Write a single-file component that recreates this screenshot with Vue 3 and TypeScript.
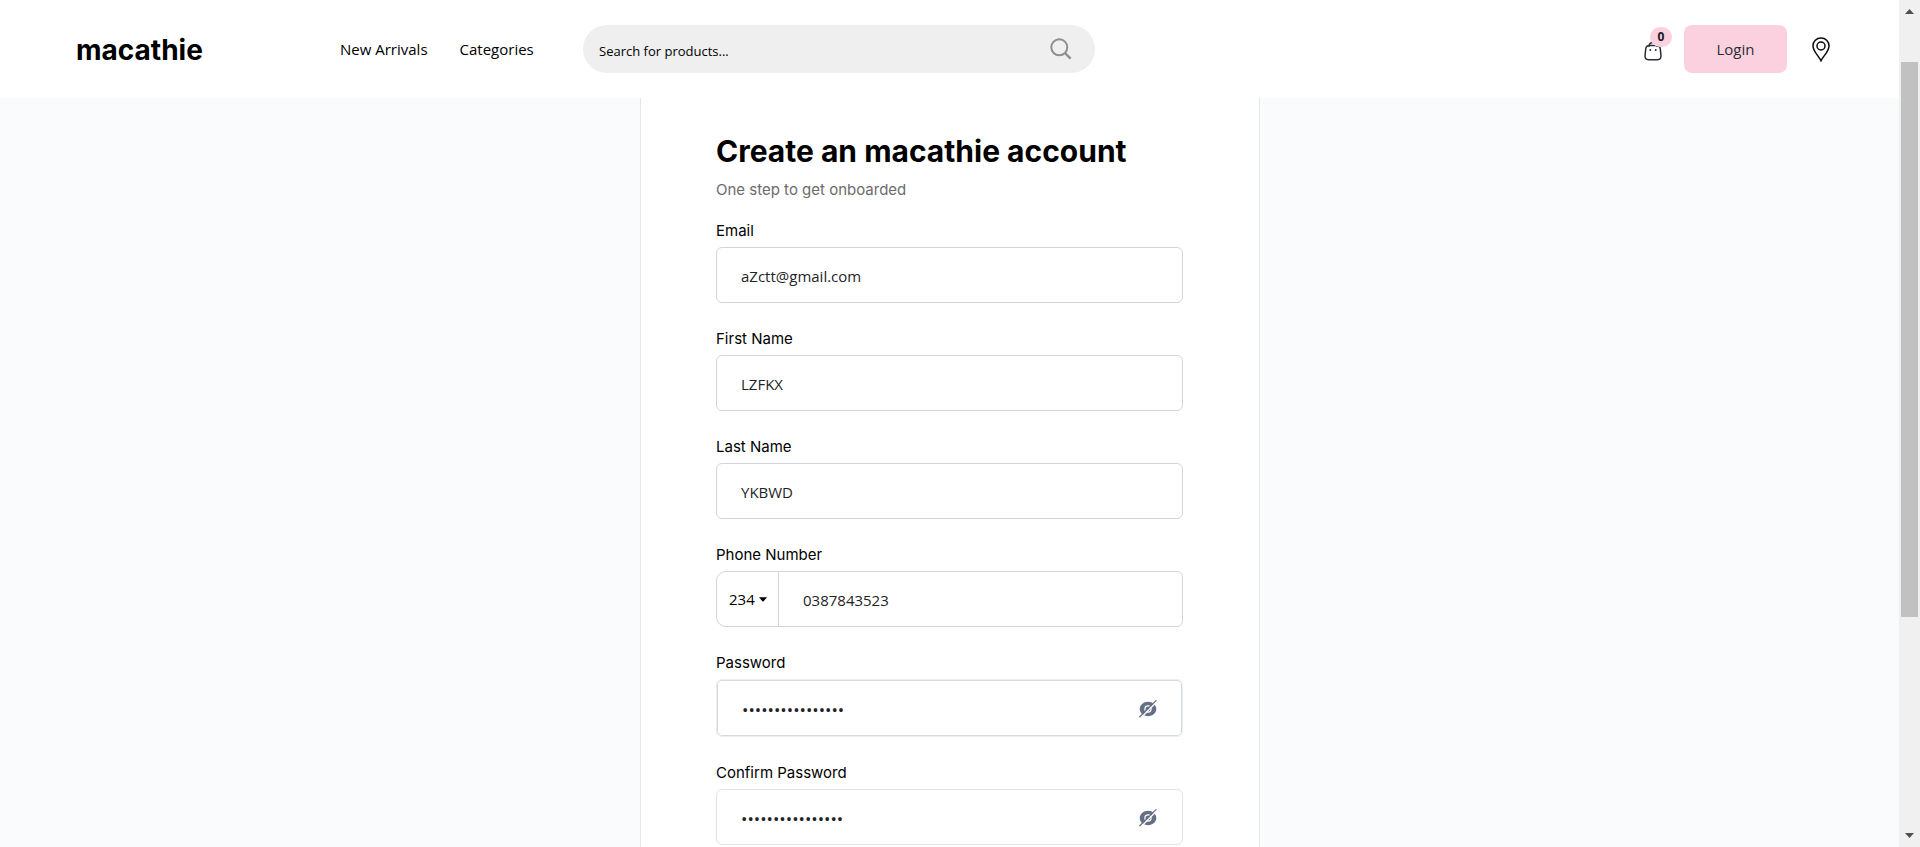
<script setup lang="ts">
import { ref } from 'vue'

interface Field {
  id: string
  label: string
  type: string
  value: string
}

const fields = ref<Field[]>([
  { id: 'email', label: 'Email', type: 'email', value: 'aZctt@gmail.com' },
  { id: 'first-name', label: 'First Name', type: 'text', value: 'LZFKX' },
  { id: 'last-name', label: 'Last Name', type: 'text', value: 'YKBWD' },
])
const secrets = ref([
  { id: 'password', label: 'Password', value: 'abcdefghijklmnop', shown: false, ringed: true },
  { id: 'confirm', label: 'Confirm Password', value: 'abcdefghijklmnop', shown: false, ringed: false },
])
const phone = ref('0387843523')
const query = ref('')
</script>

<template>
  <div class="screen">
    <div class="page">
      <header class="topbar">
        <a class="logo" href="#">macathie</a>
        <nav class="nav">
          <a href="#">New Arrivals</a>
          <a href="#">Categories</a>
        </nav>
        <form class="search" @submit.prevent>
          <input v-model="query" type="text" aria-label="Search for products" placeholder="Search for products..." />
          <button type="submit" aria-label="Search">
            <svg width="22" height="22" viewBox="0 0 22 22" fill="none" stroke="#8e8e8e" stroke-width="2">
              <circle cx="9.3" cy="9.3" r="8" />
              <path d="M15 15l5.6 5.6" stroke-width="2.4" />
            </svg>
          </button>
        </form>
        <div class="actions">
          <button class="bag" type="button" aria-label="Cart">
            <svg width="18" height="20" viewBox="0 0 18 20" fill="none" stroke="#292d32" stroke-width="1.5" stroke-linecap="round">
              <path d="M5 5.2C5.2 2.8 6.800 1.400 9 1.400S12.800 2.800 13 5.200" />
              <path d="M5.600 4.600H12.400C15 4.600 16 5.600 16.300 8L16.900 13.800C17.200 17.200 16.400 18.700 13.200 18.700H4.800C1.600 18.700 .8 17.200 1.100 13.800L1.700 8C2 5.600 3 4.600 5.600 4.600Z" />
              <path d="M6.300 9h.1M11.700 9h.1" stroke-width="1.800" />
            </svg>
            <span class="count">0</span>
          </button>
          <button class="login" type="button">Login</button>
          <a class="pin" href="#" aria-label="Store location">
            <svg width="18" height="25" viewBox="0 0 18 25" fill="none" stroke="#0b0b0b" stroke-width="1.500">
              <path d="M9 23.700C7.500 20 1 14.500 1 8.900C1 4.300 4.500 1 9 1S17 4.300 17 8.900C17 14.500 10.500 20 9 23.700Z" />
              <circle cx="9" cy="9" r="4" />
            </svg>
          </a>
        </div>
      </header>

      <main class="content">
        <form class="card" @submit.prevent>
          <h1>Create an macathie account</h1>
          <p class="sub">One step to get onboarded</p>

          <div v-for="f in fields" :key="f.id" class="field">
            <label :for="f.id">{{ f.label }}</label>
            <div class="box">
              <input :id="f.id" v-model="f.value" :type="f.type" />
            </div>
          </div>

          <div class="field">
            <label for="phone">Phone Number</label>
            <div class="box phone">
              <button class="code" type="button" aria-label="Country code 234">
                234
                <svg width="8" height="5" viewBox="0 0 8 5"><path d="M0 .3H8L4.600 4.300Q4 4.900 3.400 4.300Z" fill="#000" /></svg>
              </button>
              <input id="phone" v-model="phone" type="tel" />
            </div>
          </div>

          <div v-for="s in secrets" :key="s.id" class="field">
            <label :for="s.id">{{ s.label }}</label>
            <div class="secret" :class="{ ringed: s.ringed }">
              <input :id="s.id" v-model="s.value" :type="s.shown ? 'text' : 'password'" />
              <button type="button" aria-label="Toggle password visibility" @click="s.shown = !s.shown">
                <svg width="18" height="18" viewBox="0 0 18 18">
                  <path d="M9 1.800C13.600 1.800 17.300 5.200 17.300 9S13.600 16.200 9 16.200S.7 12.800 .7 9S4.400 1.800 9 1.800Z" fill="#667085" />
                  <circle cx="9" cy="9" r="3.100" fill="#667085" stroke="#fff" stroke-width="1.200" />
                  <path d="M2.200 17.400L17.800 1.800" stroke="#fff" stroke-width="1.400" />
                  <path d="M.8 16.800L17 .6" stroke="#667085" stroke-width="1.300" stroke-linecap="round" />
                </svg>
              </button>
            </div>
          </div>
        </form>
      </main>
    </div>

    <div class="scrollbar" aria-hidden="true">
      <svg class="arrow" width="9" height="5" viewBox="0 0 9 5"><path d="M0 5L4.500 0L9 5Z" fill="#505050" /></svg>
      <div class="track"><div class="thumb"></div></div>
      <svg class="arrow" width="9" height="5" viewBox="0 0 9 5"><path d="M0 0L4.500 5L9 0Z" fill="#505050" /></svg>
    </div>
  </div>
</template>

<style>
body {
  margin: 0;
  overflow: hidden;
}
</style>

<style scoped>
.screen {
  display: flex;
  height: 100vh;
  overflow: hidden;
  color: #000;
  font-family: 'Open Sans', 'Noto Sans', sans-serif;
  font-size: 15px;
}
.screen *,
.screen *::before {
  box-sizing: border-box;
}
a {
  color: inherit;
  text-decoration: none;
}
button {
  padding: 0;
  border: 0;
  background: none;
  color: inherit;
  font: inherit;
  cursor: pointer;
}
svg {
  display: block;
}
input {
  min-width: 0;
  border: 0;
  outline: 0;
  background: transparent;
  font: inherit;
}
.page {
  display: flex;
  flex: 1;
  flex-direction: column;
  min-width: 0;
  background: #f9fbfd;
}
.topbar {
  display: flex;
  flex: none;
  align-items: center;
  height: 98px;
  padding: 0 69px 0 76px;
  background: #fff;
}
.logo {
  width: 264px;
  padding-top: 2px;
  font: 700 28px/36px Inter, sans-serif;
}
.nav {
  display: flex;
  gap: 32px;
  width: 243px;
  white-space: nowrap;
}
.search {
  display: flex;
  align-items: center;
  width: 512px;
  height: 48px;
  padding: 0 23px 0 16px;
  border-radius: 24px;
  background: #efefef;
}
.search input {
  flex: 1;
  padding: 4px 0 0;
  font-size: 13px;
}
.search input::placeholder {
  color: #000;
  opacity: 1;
}
.actions {
  display: flex;
  align-items: center;
  margin-left: auto;
}
.bag {
  position: relative;
  margin: 3px 22px 0 0;
}
.count {
  position: absolute;
  bottom: 14px;
  left: 6px;
  width: 22px;
  height: 20px;
  border-radius: 10px;
  background: #fbd1e0;
  color: #18181b;
  font-size: 12px;
  font-weight: 700;
  line-height: 20px;
}
.login {
  width: 103px;
  height: 48px;
  margin-right: 25px;
  border-radius: 8px;
  background: #fbd1e0;
  color: #292d32;
}
.content {
  display: flex;
  flex: 1;
  justify-content: center;
  padding-left: 1px;
}
.card {
  width: 620px;
  padding: 32px 76px 32px 75px;
  border: solid #e4e7ec;
  border-width: 0 1px;
  background: #fff;
}
h1 {
  margin: 0;
  font: 700 30px/42px Inter, sans-serif;
}
.sub {
  margin: 8px 0 21px;
  color: #6b6b6b;
  font: 15px/20px Inter, sans-serif;
}
.field {
  margin-bottom: 26px;
}
label {
  display: block;
  margin-bottom: 6px;
  font: 15px/20px Inter, sans-serif;
}
.box,
.secret {
  display: flex;
  height: 56px;
  border: 1px solid #d0d5dd;
  border-radius: 6px;
  color: #1d2939;
}
.field input {
  flex: 1;
  padding: 2px 24px 0;
  color: #1f2328;
}
.field .secret input {
  font-size: 17px;
}
.phone {
  border-radius: 10px 6px 6px 10px;
}
.code {
  display: flex;
  align-items: center;
  gap: 4px;
  width: 62px;
  padding-left: 12px;
  border-right: 1px solid #d0d5dd;
  color: #000;
}
.secret button {
  display: flex;
  align-items: center;
  justify-content: center;
  width: 69px;
  padding-top: 2px;
}
.secret {
  border-color: #e0e3e9;
}
.secret.ringed {
  height: 58px;
  border: 1px solid #eceef2;
  box-shadow: inset 0 0 0 1px #d5d9e1;
}
.ringed input {
  padding-left: 25px;
}
.scrollbar {
  display: flex;
  flex: none;
  flex-direction: column;
  align-items: center;
  width: 21px;
  padding: 9px 0;
  background: #f0f0f0;
}
.track {
  flex: 1;
  width: 17px;
  padding: 48px 0 0;
}
.thumb {
  height: 72%;
  background: #c1c1c1;
}
</style>
